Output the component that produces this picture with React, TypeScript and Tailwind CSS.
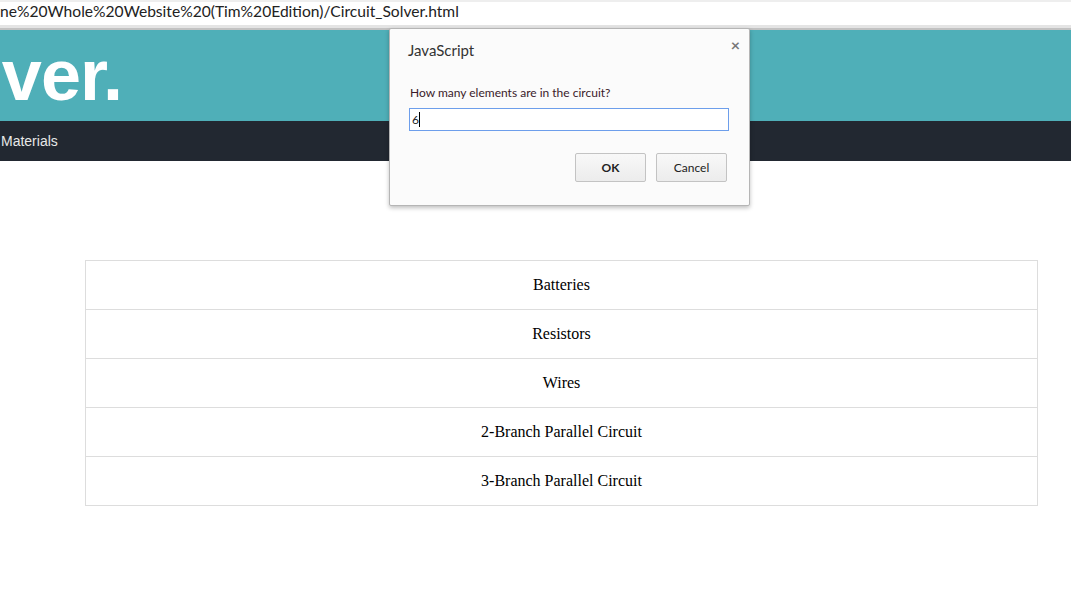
import React from "react";

const rows = [
  "Batteries",
  "Resistors",
  "Wires",
  "2-Branch Parallel Circuit",
  "3-Branch Parallel Circuit",
];

export default function App() {
  return (
    <div className="relative w-[1071px] h-[600px] overflow-hidden bg-white">
      {/* address bar */}
      <div className="h-[25px] bg-white border-t-2 border-[#eeeeee] flex items-center overflow-hidden">
        <span
          className="whitespace-nowrap text-[15.6px] text-[#222] leading-none mt-[-4px]"
          style={{ fontFamily: 'Lato, "Noto Sans", sans-serif' }}
        >
          ne%20Whole%20Website%20(Tim%20Edition)/Circuit_Solver.html
        </span>
      </div>
      <div className="h-[3px] bg-[#e4e4e4]" />
      <div className="h-[2px] bg-[#c2c2c2]" />

      {/* header */}
      <div className="h-[91px] bg-[#4fafb8] flex items-center overflow-hidden">
        <div className="w-[122px] shrink-0 flex justify-end">
          <span
            className="whitespace-nowrap text-white font-bold text-[72px] leading-none tracking-[-1px] mt-[-2px]"
            style={{ fontFamily: '"Liberation Sans", Arial, sans-serif' }}
          >
            ver.
          </span>
        </div>
      </div>

      {/* nav */}
      <div className="h-[40px] bg-[#222831] flex items-center overflow-hidden">
        <span
          className="whitespace-nowrap text-[#e8e8e8] text-[14px] leading-none pl-[1px]"
          style={{ fontFamily: '"Liberation Sans", Arial, sans-serif' }}
        >
          Materials
        </span>
      </div>

      {/* table */}
      <div className="pt-[99px] pl-[85px]">
        <div
          className="w-[953px] border border-[#dddddd]"
          style={{ fontFamily: '"Liberation Serif", "Times New Roman", serif' }}
        >
          {rows.map((r, i) => (
            <div
              key={r}
              className={`flex items-center justify-center text-[16px] text-black ${
                i > 0 ? "h-[49px] border-t border-[#dddddd]" : "h-[48px]"
              }`}
            >
              {r}
            </div>
          ))}
        </div>
      </div>

      {/* dialog */}
      <div
        className="absolute left-[389px] top-[28px] w-[361px] h-[178px] bg-[#fbfbfb] border border-[#b5b5b5] shadow-[0_2px_4px_rgba(0,0,0,0.25)] rounded-[2px]"
        style={{ fontFamily: 'Lato, "Noto Sans", sans-serif' }}
      >
        <div className="flex items-start justify-between pl-[18px] pr-[9px] pt-[12px]">
          <span className="text-[15px] text-[#333] leading-[18px]">JavaScript</span>
          <span className="text-[#777] text-[16px] font-bold leading-none mt-[-4px]">×</span>
        </div>
        <div className="pl-[20px] pt-[26px] text-[12px] text-[#3a1a2a] leading-[16px]">
          How many elements are in the circuit?
        </div>
        <div className="ml-[19px] mt-[7px] w-[320px] h-[23px] bg-white border border-[#6d9eeb] flex items-center pl-[2px]">
          <span className="text-[12px] text-[#222] leading-none">6</span>
          <span className="w-px h-[15px] bg-black" />
        </div>
        <div className="flex justify-end gap-[10px] pr-[22px] pt-[22px]">
          <button className="w-[71px] h-[29px] border border-[#c3c3c3] rounded-[2px] bg-gradient-to-b from-[#f8f8f8] to-[#ececec] text-[12px] font-bold text-[#222]">
            OK
          </button>
          <button className="w-[71px] h-[29px] border border-[#c3c3c3] rounded-[2px] bg-gradient-to-b from-[#f8f8f8] to-[#ececec] text-[12px] text-[#222]">
            Cancel
          </button>
        </div>
      </div>
    </div>
  );
}
